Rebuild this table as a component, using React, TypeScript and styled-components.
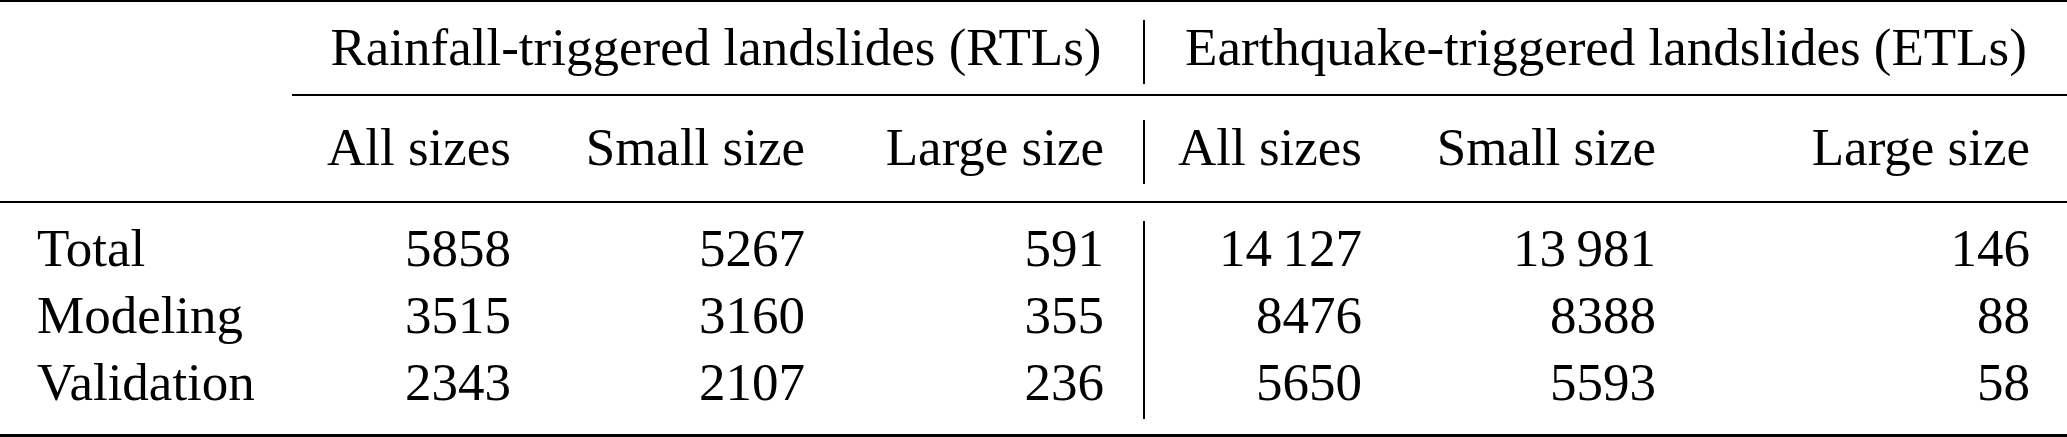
import React from 'react'
import styled, { createGlobalStyle, css } from 'styled-components'

const COLUMNS = '290px 260px 294px 299px 2px 256px 294px 1fr'

const GlobalStyle = createGlobalStyle`
  html,
  body {
    margin: 0;
    padding: 0;
    background: #ffffff;
  }
`

const serifText = css`
  font-family: "Liberation Serif", "Times New Roman", serif;
  font-size: 53px;
  line-height: 1.05;
  color: #000000;
  white-space: nowrap;
`

const Table = styled.div`
  width: 2067px;
  display: flex;
  flex-direction: column;
  background: #ffffff;
`
const Rule = styled.div<{ $weight: number }>`
  height: ${props => props.$weight}px;
  background: #000000;
`
const PartialRule = styled(Rule)`
  margin-left: 292px;
`
const Section = styled.div<{ $top: number; $bottom: number }>`
  display: grid;
  grid-template-columns: ${COLUMNS};
  grid-auto-rows: 67px;
  align-items: center;
  padding: ${props => props.$top}px 0 ${props => props.$bottom}px;
`
const Divider = styled.div<{ $span: number }>`
  grid-column: 5;
  grid-row: 1 / span ${props => props.$span};
  align-self: stretch;
  margin: 6px 0 -3px;
  background: #000000;
`
const GroupHeader = styled.span<{ $last?: boolean }>`
  ${serifText};
  display: block;
  grid-column: span 3;
  text-align: center;
  padding: ${props => (props.$last ? '0 37px' : '0 39px 0 38px')};
`
const Label = styled.span`
  ${serifText};
  display: block;
  padding-left: 37px;
`
const Cell = styled.span<{ $last?: boolean }>`
  ${serifText};
  display: block;
  text-align: right;
  padding-right: ${props => (props.$last ? 37 : 39)}px;
`

const sizes = ['All sizes', 'Small size', 'Large size']

const rows = [
  { name: 'Total', values: ['5858', '5267', '591', '14\u2009127', '13\u2009981', '146'] },
  { name: 'Modeling', values: ['3515', '3160', '355', '8476', '8388', '88'] },
  { name: 'Validation', values: ['2343', '2107', '236', '5650', '5593', '58'] }
]

const App = () => {
  return (
    <>
      <GlobalStyle />
      <Table>
        <Rule $weight={2} />

        <Section $top={12} $bottom={13}>
          <Divider $span={1} />
          <Label />
          <GroupHeader>Rainfall-triggered landslides (RTLs)</GroupHeader>
          <GroupHeader $last>Earthquake-triggered landslides (ETLs)</GroupHeader>
        </Section>

        <PartialRule $weight={2} />

        <Section $top={18} $bottom={20}>
          <Divider $span={1} />
          <Label />
          {[...sizes, ...sizes].map((size, i) => (
            <Cell key={i} $last={i === 5}>
              {size}
            </Cell>
          ))}
        </Section>

        <Rule $weight={2} />

        <Section $top={12} $bottom={18}>
          <Divider $span={rows.length} />
          {rows.map(row => (
            <React.Fragment key={row.name}>
              <Label>{row.name}</Label>
              {row.values.map((value, i) => (
                <Cell key={i} $last={i === 5}>
                  {value}
                </Cell>
              ))}
            </React.Fragment>
          ))}
        </Section>

        <Rule $weight={3} />
      </Table>
    </>
  )
}

export default App
